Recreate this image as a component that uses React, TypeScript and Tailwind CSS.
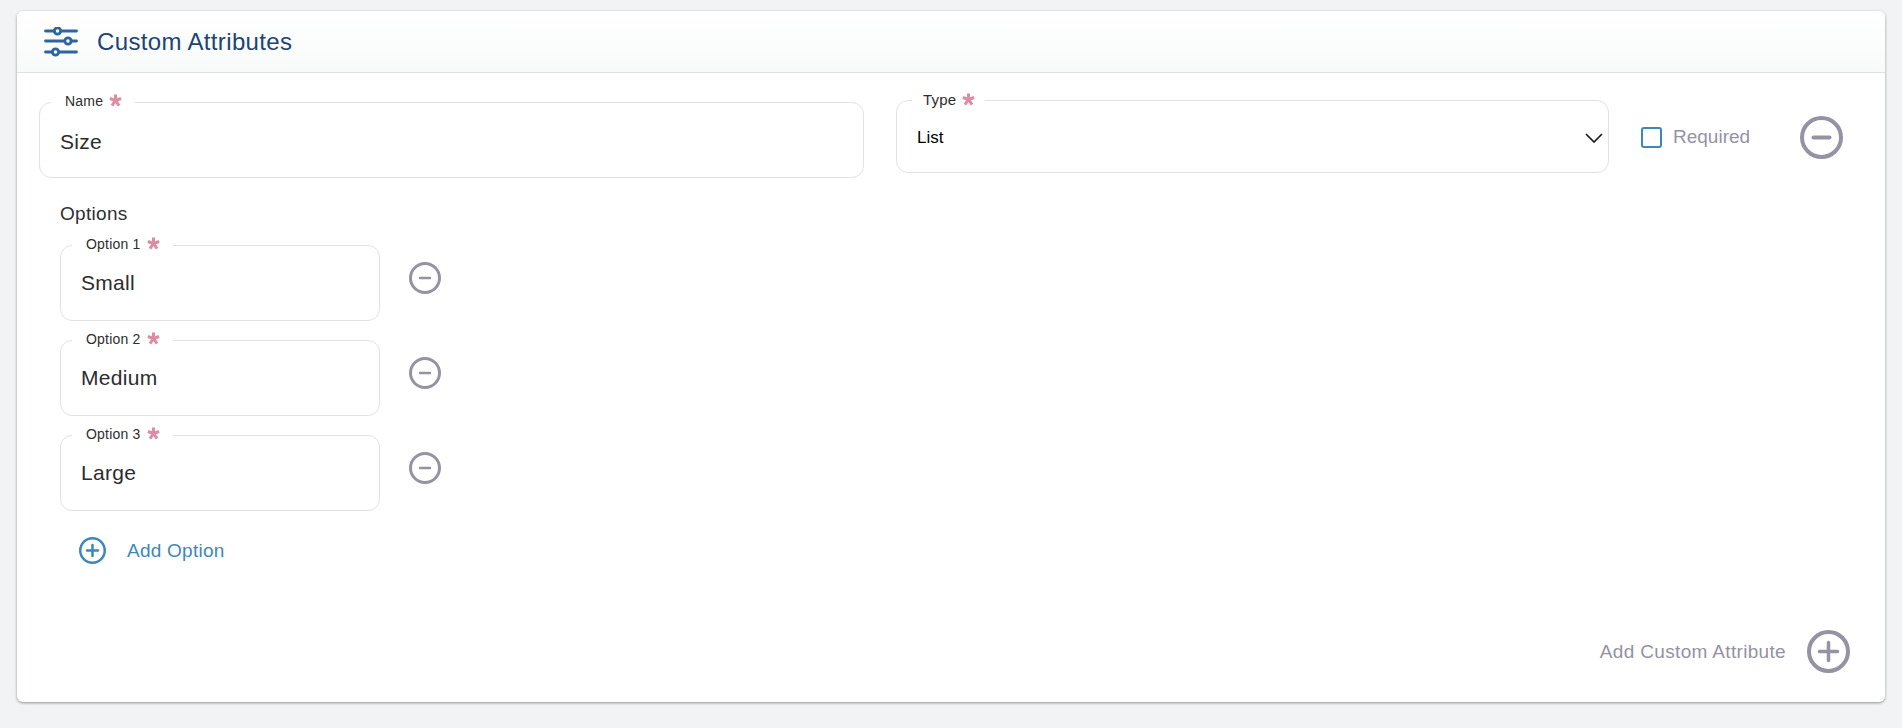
const FONT = "font-['Liberation_Sans',Arial,sans-serif]";

function Star() {
	return (
		<svg viewBox="0 0 12 12" className="ml-[6px] h-[13px] w-[13px] -translate-y-[1px]" aria-hidden="true">
			<path
				d="M6 .5v6M6 6L.8 4.200M6 6l5.200-1.800M6 6l-3.300 4.800M6 6l3.300 4.800"
				stroke="#dc8ca3"
				strokeWidth="2.8"
				fill="none"
			/>
		</svg>
	);
}

function Field({
	label,
	value,
	className,
	inner,
}: {
	label: string;
	value: string;
	className: string;
	inner: string;
}) {
	return (
		<fieldset className={`rounded-[12px] border border-[#e1e2e4] ${className}`}>
			<legend className="ml-[11px] flex h-[16px] -translate-y-[1px] items-center pr-[13px] pl-[14px] text-[14px] leading-[16px] tracking-[0.2px] text-[#2e2e30]">
				{label}
				<Star />
			</legend>
			<div className={`text-[21px] leading-[24px] tracking-[0.3px] text-[#2c2c2e] ${inner}`}>{value}</div>
		</fieldset>
	);
}

function CircleButton({
	size,
	stroke,
	bar,
	barWeight,
	color,
	plus,
}: {
	size: number;
	stroke: number;
	bar: number;
	barWeight: number;
	color: string;
	plus?: boolean;
}) {
	const c = size / 2;
	const r = c - stroke / 2;
	return (
		<svg width={size} height={size} viewBox={`0 0 ${size} ${size}`} className="shrink-0">
			<circle cx={c} cy={c} r={r} fill="none" stroke={color} strokeWidth={stroke} />
			<path
				d={`M${c - bar / 2} ${c}h${bar}${plus ? `M${c} ${c - bar / 2}v${bar}` : ''}`}
				stroke={color}
				strokeWidth={barWeight}
				strokeLinecap="round"
			/>
		</svg>
	);
}

const OPTIONS = [
	{ label: 'Option 1', value: 'Small' },
	{ label: 'Option 2', value: 'Medium' },
	{ label: 'Option 3', value: 'Large' },
];

export default function App() {
	return (
		<div className={`min-h-[728px] bg-[#f2f3f5] px-[17px] pt-[11px] ${FONT}`}>
			<section className="h-[691px] rounded-[6px] bg-white shadow-[0_1px_3px_rgba(0,0,0,0.4)]">
				<header className="flex h-[62px] items-center rounded-t-[6px] border-b border-[#dfe1e3] bg-gradient-to-b from-white to-[#f8fafa] pl-[27px]">
					<svg width="34" height="30" viewBox="0 0 34 30" fill="none" stroke="#2f659f" strokeWidth="2.8" strokeLinecap="round">
						<path d="M1.500 4h9M17 4h15.500M1.500 14h19M27 14h5.500M1.500 25h7M15 25h17.500" />
						<circle cx="13.500" cy="4" r="3.200" />
						<circle cx="24" cy="14" r="3.200" />
						<circle cx="11.500" cy="25" r="3.200" />
					</svg>
					<h2 className="ml-[19px] text-[24px] leading-[30px] tracking-[0.35px] text-[#1c4476]">Custom Attributes</h2>
				</header>

				<div className="flex items-start pt-[19px] pl-[22px]">
					<Field label="Name" value="Size" className="mt-[2px] h-[84px] w-[825px]" inner="pt-[20px] pl-[20px]" />
					<fieldset className="relative ml-[32px] h-[81px] w-[713px] rounded-[12px] border border-[#e1e2e4]">
						<legend className="ml-[15px] flex h-[16px] items-center pr-[10px] pl-[11px] text-[15px] leading-[16px] tracking-[0.2px] text-[#2e2e30]">
							Type
							<Star />
						</legend>
						<div className="flex items-center justify-between pt-[18px] pr-[5px] pl-[20px] text-[17px] leading-[24px] text-black">
							List
							<svg width="18" height="10" viewBox="0 0 18 10" fill="none" stroke="#1b1b1b" strokeWidth="1.7">
								<path d="M1 1l8 8 8-8" />
							</svg>
						</div>
					</fieldset>
					<label className="mt-[33px] ml-[32px] flex items-center text-[19px] leading-[24px] text-[#9592a3]">
						<span className="h-[21px] w-[21px] rounded-[3px] border-2 border-[#3d87ba]" />
						<span className="ml-[11px]">Required</span>
					</label>
					<div className="mt-[24px] ml-[50px]">
						<CircleButton size={43} stroke={4} bar={16} barWeight={4} color="#9592a3" />
					</div>
				</div>

				<div className="mt-[24px] pl-[43px] text-[19px] leading-[24px] tracking-[0.3px] text-[#2e2e30]">Options</div>

				<div className="mt-[11px] flex flex-col gap-[11px] pl-[43px]">
					{OPTIONS.map((option) => (
						<div key={option.label} className="flex items-start">
							<Field label={option.label} value={option.value} className="h-[84px] w-[320px]" inner="pt-[18px] pl-[20px]" />
							<div className="mt-[25px] ml-[29px]">
								<CircleButton size={32} stroke={3} bar={10} barWeight={2.500} color="#9592a3" />
							</div>
						</div>
					))}
				</div>

				<button className="mt-[26px] ml-[62px] flex items-center text-[19px] leading-[24px] tracking-[0.25px] text-[#3d87ba]">
					<CircleButton size={27} stroke={2.5} bar={11} barWeight={2.500} color="#3d87ba" plus />
					<span className="ml-[21px]">Add Option</span>
				</button>

				<div className="mt-[66px] flex items-center justify-end pr-[35px] text-[19px] leading-[24px] tracking-[0.33px] text-[#9592a3]">
					Add Custom Attribute
					<span className="ml-[21px]">
						<CircleButton size={43} stroke={4} bar={18} barWeight={3.500} color="#9592a3" plus />
					</span>
				</div>
			</section>
		</div>
	);
}
